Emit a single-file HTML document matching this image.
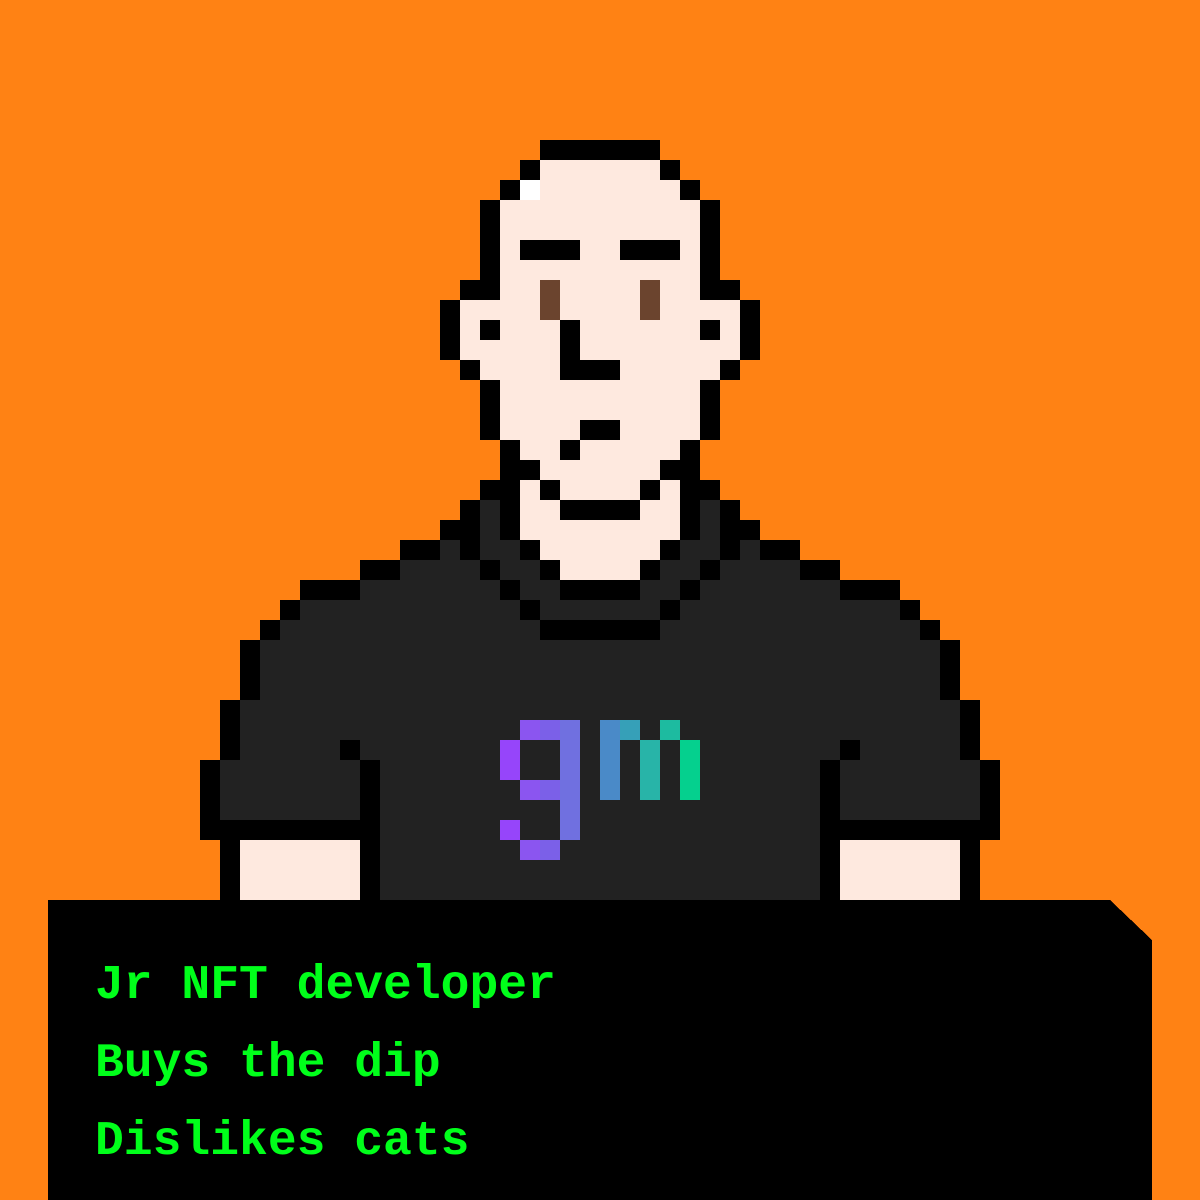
<!DOCTYPE html>
<html><head><meta charset="utf-8"><style>
html,body{margin:0;padding:0;background:#FF8214;}
body{width:1200px;height:1200px;position:relative;overflow:hidden;}
svg{position:absolute;left:0;top:0;}
.k{fill:#000}.s{fill:#FEE9DF}.d{fill:#222}.b{fill:#6B442E}.w{fill:#fff}
.t{position:absolute;left:95px;font-family:"Liberation Mono",monospace;font-weight:bold;font-size:48px;color:#00FF1A;line-height:1;white-space:pre;}
</style></head><body>
<svg width="1200" height="1200" viewBox="0 0 60 60" shape-rendering="crispEdges">
<rect width="60" height="60" fill="#FF8214"/>
<!-- row7 -->
<rect class="k" x="27" y="7" width="6" height="1"/>
<rect class="k" x="26" y="8" width="1" height="1"/><rect class="s" x="27" y="8" width="6" height="1"/><rect class="k" x="33" y="8" width="1" height="1"/>
<rect class="k" x="25" y="9" width="1" height="1"/><rect class="w" x="26" y="9" width="1" height="1"/><rect class="s" x="27" y="9" width="7" height="1"/><rect class="k" x="34" y="9" width="1" height="1"/>
<rect class="k" x="24" y="10" width="1" height="4"/><rect class="s" x="25" y="10" width="10" height="4"/><rect class="k" x="35" y="10" width="1" height="4"/>
<rect class="k" x="26" y="12" width="3" height="1"/><rect class="k" x="31" y="12" width="3" height="1"/>
<rect class="k" x="23" y="14" width="2" height="1"/><rect class="s" x="25" y="14" width="10" height="1"/><rect class="k" x="35" y="14" width="2" height="1"/>
<rect class="k" x="22" y="15" width="1" height="3"/><rect class="s" x="23" y="15" width="14" height="3"/><rect class="k" x="37" y="15" width="1" height="3"/>
<rect class="b" x="27" y="14" width="1" height="2"/><rect class="b" x="32" y="14" width="1" height="2"/>
<rect class="k" x="24" y="16" width="1" height="1"/><rect class="k" x="35" y="16" width="1" height="1"/><rect class="k" x="28" y="16" width="1" height="2"/>
<rect class="k" x="23" y="18" width="1" height="1"/><rect class="s" x="24" y="18" width="12" height="1"/><rect class="k" x="36" y="18" width="1" height="1"/><rect class="k" x="28" y="18" width="3" height="1"/>
<rect class="k" x="24" y="19" width="1" height="3"/><rect class="s" x="25" y="19" width="10" height="3"/><rect class="k" x="35" y="19" width="1" height="3"/><rect class="k" x="29" y="21" width="2" height="1"/>
<rect class="k" x="25" y="22" width="1" height="1"/><rect class="s" x="26" y="22" width="8" height="1"/><rect class="k" x="34" y="22" width="1" height="1"/><rect class="k" x="28" y="22" width="1" height="1"/>
<rect class="k" x="25" y="23" width="2" height="1"/><rect class="s" x="27" y="23" width="6" height="1"/><rect class="k" x="33" y="23" width="2" height="1"/>
<!-- row24 -->
<rect class="k" x="24" y="24" width="2" height="1"/><rect class="s" x="26" y="24" width="1" height="1"/><rect class="k" x="27" y="24" width="1" height="1"/><rect class="s" x="28" y="24" width="4" height="1"/><rect class="k" x="32" y="24" width="1" height="1"/><rect class="s" x="33" y="24" width="1" height="1"/><rect class="k" x="34" y="24" width="2" height="1"/>
<!-- row25 -->
<rect class="k" x="23" y="25" width="1" height="1"/><rect class="d" x="24" y="25" width="1" height="1"/><rect class="k" x="25" y="25" width="1" height="1"/><rect class="s" x="26" y="25" width="2" height="1"/><rect class="k" x="28" y="25" width="4" height="1"/><rect class="s" x="32" y="25" width="2" height="1"/><rect class="k" x="34" y="25" width="1" height="1"/><rect class="d" x="35" y="25" width="1" height="1"/><rect class="k" x="36" y="25" width="1" height="1"/>
<!-- row26 -->
<rect class="k" x="22" y="26" width="2" height="1"/><rect class="d" x="24" y="26" width="1" height="1"/><rect class="k" x="25" y="26" width="1" height="1"/><rect class="s" x="26" y="26" width="8" height="1"/><rect class="k" x="34" y="26" width="1" height="1"/><rect class="d" x="35" y="26" width="1" height="1"/><rect class="k" x="36" y="26" width="2" height="1"/>
<!-- row27 -->
<rect class="k" x="20" y="27" width="2" height="1"/><rect class="d" x="22" y="27" width="1" height="1"/><rect class="k" x="23" y="27" width="1" height="1"/><rect class="d" x="24" y="27" width="2" height="1"/><rect class="k" x="26" y="27" width="1" height="1"/><rect class="s" x="27" y="27" width="6" height="1"/><rect class="k" x="33" y="27" width="1" height="1"/><rect class="d" x="34" y="27" width="2" height="1"/><rect class="k" x="36" y="27" width="1" height="1"/><rect class="d" x="37" y="27" width="1" height="1"/><rect class="k" x="38" y="27" width="2" height="1"/>
<!-- row28 -->
<rect class="k" x="18" y="28" width="2" height="1"/><rect class="d" x="20" y="28" width="4" height="1"/><rect class="k" x="24" y="28" width="1" height="1"/><rect class="d" x="25" y="28" width="2" height="1"/><rect class="k" x="27" y="28" width="1" height="1"/><rect class="s" x="28" y="28" width="4" height="1"/><rect class="k" x="32" y="28" width="1" height="1"/><rect class="d" x="33" y="28" width="2" height="1"/><rect class="k" x="35" y="28" width="1" height="1"/><rect class="d" x="36" y="28" width="4" height="1"/><rect class="k" x="40" y="28" width="2" height="1"/>
<!-- row29 -->
<rect class="k" x="15" y="29" width="3" height="1"/><rect class="d" x="18" y="29" width="7" height="1"/><rect class="k" x="25" y="29" width="1" height="1"/><rect class="d" x="26" y="29" width="2" height="1"/><rect class="k" x="28" y="29" width="4" height="1"/><rect class="d" x="32" y="29" width="2" height="1"/><rect class="k" x="34" y="29" width="1" height="1"/><rect class="d" x="35" y="29" width="7" height="1"/><rect class="k" x="42" y="29" width="3" height="1"/>
<!-- row30 -->
<rect class="k" x="14" y="30" width="1" height="1"/><rect class="d" x="15" y="30" width="11" height="1"/><rect class="k" x="26" y="30" width="1" height="1"/><rect class="d" x="27" y="30" width="6" height="1"/><rect class="k" x="33" y="30" width="1" height="1"/><rect class="d" x="34" y="30" width="11" height="1"/><rect class="k" x="45" y="30" width="1" height="1"/>
<!-- row31 -->
<rect class="k" x="13" y="31" width="1" height="1"/><rect class="d" x="14" y="31" width="13" height="1"/><rect class="k" x="27" y="31" width="6" height="1"/><rect class="d" x="33" y="31" width="13" height="1"/><rect class="k" x="46" y="31" width="1" height="1"/>
<!-- rows32-34 -->
<rect class="k" x="12" y="32" width="1" height="3"/><rect class="d" x="13" y="32" width="34" height="3"/><rect class="k" x="47" y="32" width="1" height="3"/>
<!-- rows35-37 -->
<rect class="k" x="11" y="35" width="1" height="3"/><rect class="d" x="12" y="35" width="36" height="3"/><rect class="k" x="48" y="35" width="1" height="3"/>
<rect class="k" x="17" y="37" width="1" height="1"/><rect class="k" x="42" y="37" width="1" height="1"/>
<!-- rows38-40 -->
<rect class="k" x="10" y="38" width="1" height="3"/><rect class="d" x="11" y="38" width="7" height="3"/><rect class="k" x="18" y="38" width="1" height="3"/><rect class="d" x="19" y="38" width="22" height="3"/><rect class="k" x="41" y="38" width="1" height="3"/><rect class="d" x="42" y="38" width="7" height="3"/><rect class="k" x="49" y="38" width="1" height="3"/>
<!-- row41 -->
<rect class="k" x="10" y="41" width="9" height="1"/><rect class="d" x="19" y="41" width="22" height="1"/><rect class="k" x="41" y="41" width="9" height="1"/>
<!-- rows42-45 -->
<rect class="k" x="11" y="42" width="1" height="4"/><rect class="s" x="12" y="42" width="6" height="4"/><rect class="k" x="18" y="42" width="1" height="4"/><rect class="d" x="19" y="42" width="22" height="4"/><rect class="k" x="41" y="42" width="1" height="4"/><rect class="s" x="42" y="42" width="6" height="4"/><rect class="k" x="48" y="42" width="1" height="4"/>
<!-- gm logo -->
<rect fill="#8B55F0" x="26" y="36" width="1" height="1"/><rect fill="#7B60E8" x="27" y="36" width="1" height="1"/><rect fill="#7070E0" x="28" y="36" width="1" height="6"/>
<rect fill="#9645FA" x="25" y="37" width="1" height="2"/>
<rect fill="#8B55F0" x="26" y="39" width="1" height="1"/><rect fill="#7B60E8" x="27" y="39" width="1" height="1"/>
<rect fill="#9645FA" x="25" y="41" width="1" height="1"/>
<rect fill="#8B55F0" x="26" y="42" width="1" height="1"/><rect fill="#7B60E8" x="27" y="42" width="1" height="1"/>
<rect fill="#4A8AC8" x="30" y="36" width="1" height="4"/><rect fill="#36A0B8" x="31" y="36" width="1" height="1"/><rect fill="#1DBBA0" x="33" y="36" width="1" height="1"/>
<rect fill="#28B4A8" x="32" y="37" width="1" height="3"/><rect fill="#05D08E" x="34" y="37" width="1" height="3"/>
<!-- box -->
<polygon fill="#000" points="2.4,45 55.5,45 57.6,47 57.6,60 2.4,60"/>
</svg>
<div class="t" style="top:962px">Jr NFT developer</div>
<div class="t" style="top:1040px">Buys the dip</div>
<div class="t" style="top:1118px">Dislikes cats</div>
</body></html>
